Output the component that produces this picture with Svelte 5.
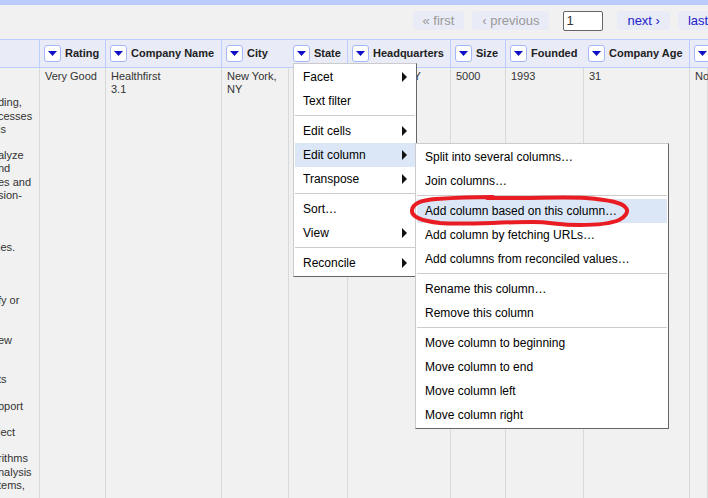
<script>
  const columns = [
    { name: '', width: 40, cell: '', line: true },
    { name: 'Rating', width: 66, cell: 'Very Good', line: true },
    { name: 'Company Name', width: 116, cell: 'Healthfirst\n3.1', line: true },
    { name: 'City', width: 67, cell: 'New York,\nNY', line: false },
    { name: 'State', width: 59, cell: '', line: true },
    { name: 'Headquarters', width: 103, cell: 'New York, NY', line: true },
    { name: 'Size', width: 55, cell: '5000', line: true },
    { name: 'Founded', width: 78, cell: '1993', line: false },
    { name: 'Company Age', width: 106, cell: '31', line: true },
    { name: '', width: 0, cell: 'No', line: false }
  ];

  const description = [
    '', '', 'ding,', 'cesses', 'is', '', 'alyze', 'nd', 'es and', 'sion-', '', '', '',
    'ies.', '', '', '', 'fy or', '', '', 'ew', '', '', 'ts', '', 'pport', '', 'ject', '',
    'rithms', 'nalysis', 'tems,'
  ].join('\n');

  const menu = [
    [{ label: 'Facet', more: true }, { label: 'Text filter' }],
    [{ label: 'Edit cells', more: true }, { label: 'Edit column', more: true, active: true }, { label: 'Transpose', more: true }],
    [{ label: 'Sort…' }, { label: 'View', more: true }],
    [{ label: 'Reconcile', more: true }]
  ];

  const submenu = [
    [{ label: 'Split into several columns…' }, { label: 'Join columns…' }],
    [{ label: 'Add column based on this column…', active: true }, { label: 'Add column by fetching URLs…' }, { label: 'Add columns from reconciled values…' }],
    [{ label: 'Rename this column…' }, { label: 'Remove this column' }],
    [{ label: 'Move column to beginning' }, { label: 'Move column to end' }, { label: 'Move column left' }, { label: 'Move column right' }]
  ];

  let page = $state('1');
</script>

{#snippet items(groups)}
  {#each groups as group, i}
    {#if i > 0}<hr />{/if}
    {#each group as item}
      <button class="item" class:active={item.active}>
        <span>{item.label}</span>
        {#if item.more}
          <svg width="5" height="10" viewBox="0 0 5 10" aria-hidden="true"><path d="M0 0L5 5L0 10Z" fill="#111" /></svg>
        {/if}
      </button>
    {/each}
  {/each}
{/snippet}

<div class="viewer">
  <nav class="pager">
    <button class="step" disabled>« first</button>
    <button class="step" disabled>‹ previous</button>
    <input aria-label="Page" bind:value={page} />
    <button class="step">next ›</button>
    <button class="step">last »</button>
  </nav>

  <table>
    <colgroup>
      {#each columns as column}
        <col style:width={column.width ? `${column.width}px` : 'auto'} />
      {/each}
    </colgroup>
    <thead>
      <tr>
        {#each columns as column, i}
          <th class:line={column.line}>
            <div class="head">
              {#if i > 0}
                <button class="drop" aria-label="Column menu {column.name}">
                  <svg width="9" height="5" viewBox="0 0 9 5" aria-hidden="true"><path d="M0 0H9L4.5 5Z" fill="#1010c8" /></svg>
                </button>
              {/if}
              <span>{column.name}</span>
            </div>
          </th>
        {/each}
      </tr>
    </thead>
    <tbody>
      <tr>
        {#each columns as column, i}
          {#if i === 0}
            <td class="cut"><div>{description}</div></td>
          {:else}
            <td>{column.cell}</td>
          {/if}
        {/each}
      </tr>
    </tbody>
  </table>

  <div class="menu main">
    {@render items(menu)}
    <div class="menu sub">
      {@render items(submenu)}
      <svg class="mark" width="222" height="34" viewBox="0 0 222 34" aria-hidden="true">
        <path d="M84 3C60 3 42 4 27 5C13 6 4 9 3 16C2 23 13 27 31 29C55 31 89 28 123 28C143 28 148 31 171 31C192 31 203 29 210 26C216 23 220 18 217 14C213 8 199 6 177 4C155 3 133 4 113 4C100 4 90 4 78 4" />
      </svg>
    </div>
  </div>
</div>

<style>
  :global(body) {
    margin: 0;
    background: #f1f1f1;
  }
  .viewer {
    position: relative;
    height: 100vh;
    overflow: hidden;
    box-sizing: border-box;
    border-top: 5px solid #bbccff;
    font-family: "Liberation Sans", Arial, sans-serif;
    font-size: 11px;
    line-height: 1.2;
    color: #333;
  }
  button {
    font: inherit;
    border: 0;
    margin: 0;
    padding: 0;
  }
  .pager {
    display: flex;
    justify-content: flex-end;
    align-items: center;
    gap: 8px;
    height: 34px;
    box-sizing: border-box;
    padding-top: 1px;
    margin-right: -21px;
    padding-bottom: 4px;
    font-size: 13px;
  }
  .step {
    height: 19px;
    padding: 0 10px;
    border-radius: 3px;
    background: #e9ebf7;
    color: #2222cc;
    white-space: nowrap;
  }
  .step:disabled {
    color: #999;
  }
  .pager input {
    width: 40px;
    height: 20px;
    box-sizing: border-box;
    margin: 0 6px;
    padding: 0 2px;
    border: 1px solid #666;
    border-radius: 2px;
    background: #fff;
    color: #333;
    font: inherit;
  }
  table {
    width: 100%;
    height: 100%;
    table-layout: fixed;
    border-spacing: 0;
  }
  th {
    height: 29px;
    box-sizing: border-box;
    padding: 0;
    border-top: 1px solid #bbccff;
    border-bottom: 1px solid #bbccff;
    background: #e9ebf7;
    color: #222;
    text-align: left;
  }
  th.line {
    border-right: 1px solid #bbccff;
  }
  .head {
    display: flex;
    align-items: center;
    gap: 4px;
    padding-left: 4px;
    white-space: nowrap;
  }
  .drop {
    display: flex;
    flex: none;
    align-items: center;
    justify-content: center;
    width: 17px;
    height: 17px;
    box-sizing: border-box;
    border: 1px solid #a6b6fa;
    border-radius: 3px;
    background: #fff;
  }
  td {
    padding: 2px 4px 2px 5px;
    border-right: 1px solid #d9d9d9;
    vertical-align: top;
    white-space: pre;
  }
  td.cut {
    padding-left: 0;
  }
  .cut div {
    margin-left: -2px;
  }
  .menu {
    position: absolute;
    box-sizing: border-box;
    padding: 1px;
    border: 1px solid #ccc;
    border-right-color: #666;
    border-bottom-color: #666;
    background: #fff;
    font-size: 12px;
    color: #000;
  }
  .main {
    left: 293px;
    top: 58px;
    width: 124px;
  }
  .sub {
    left: 121px;
    top: 79px;
    width: 254px;
  }
  .item {
    display: flex;
    align-items: center;
    justify-content: space-between;
    width: 100%;
    height: 24px;
    padding: 0 8px;
    background: transparent;
    color: #000;
    white-space: nowrap;
  }
  .item.active {
    background: #dbe7f7;
  }
  hr {
    height: 1px;
    margin: 2px 0 3px;
    border: 0;
    background: #ccc;
  }
  .mark {
    position: absolute;
    left: -7px;
    top: 50px;
    fill: none;
    stroke: #e81c22;
    stroke-width: 4;
    stroke-linecap: round;
    pointer-events: none;
  }
</style>
